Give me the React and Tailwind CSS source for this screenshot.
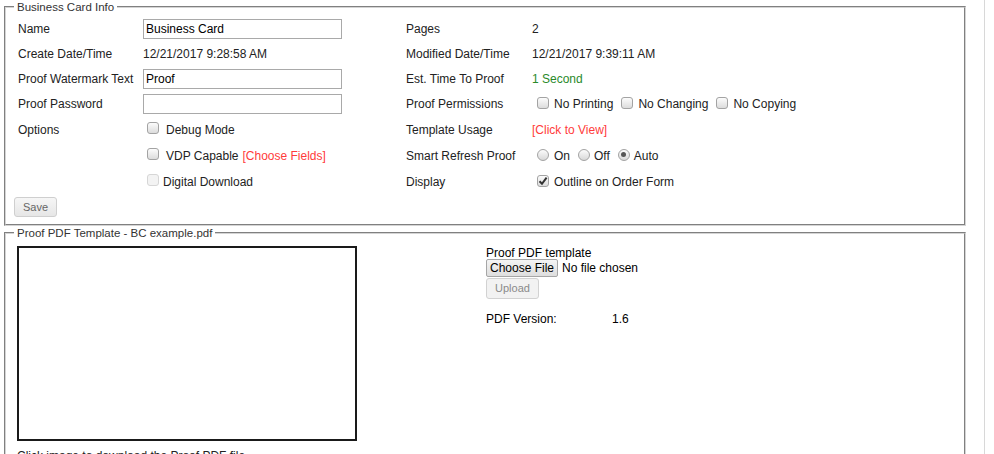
import React from "react";

const FONT = { fontFamily: '"Liberation Sans", Arial, sans-serif' };

function Box({ checked = false, disabled = false, className = "" }) {
  return (
    <span
      className={
        "inline-flex w-[12px] h-[12px] shrink-0 items-center justify-center rounded-[3px] border " +
        (disabled
          ? "border-[#d6d6d6] bg-[#f3f3f3] "
          : "border-[#a3a3a3] bg-gradient-to-b from-[#fcfcfc] to-[#dcdcdc] ") +
        className
      }
    >
      {checked && (
        <svg width="10" height="10" viewBox="0 0 10 10">
          <path d="M1.5 5.2 L4 7.8 L8.6 1.6" fill="none" stroke="#333" strokeWidth="2" />
        </svg>
      )}
    </span>
  );
}

function Radio({ checked = false, className = "" }) {
  return (
    <span
      className={
        "inline-flex w-[12px] h-[12px] shrink-0 items-center justify-center rounded-full border border-[#a3a3a3] bg-gradient-to-b from-[#fcfcfc] to-[#d8d8d8] " +
        className
      }
    >
      {checked && <span className="w-[5px] h-[5px] rounded-full bg-[#555]" />}
    </span>
  );
}

function Row({ h = "h-[25px]", label, value, rlabel, rvalue }) {
  return (
    <div className={"flex items-center " + h}>
      <div className="w-[125px] shrink-0">{label}</div>
      <div className="w-[263px] shrink-0 flex items-center">{value}</div>
      <div className="w-[126px] shrink-0">{rlabel}</div>
      <div className="flex items-center">{rvalue}</div>
    </div>
  );
}

function TextInput({ value }) {
  return (
    <div className="w-[199px] h-[20px] border border-[#a9a9a9] bg-white px-[2px] flex items-center text-black">
      {value}
    </div>
  );
}

export default function App() {
  return (
    <div className="flex bg-white text-[12px] text-[#222] h-[454px] overflow-hidden" style={FONT}>
      <div className="w-[984px] shrink-0">
        <fieldset className="ml-[4px] w-[962px] h-[226px] border-2 [border-style:groove] border-[#d4d4d4] pl-[8px] pt-[2px]">
          <legend className="px-[3px] text-[11.5px] leading-[14px] text-[#333]">Business Card Info</legend>
          <div className="pl-[4px]">
            <Row
              label="Name"
              value={<TextInput value="Business Card" />}
              rlabel="Pages"
              rvalue="2"
            />
            <Row
              label="Create Date/Time"
              value="12/21/2017 9:28:58 AM"
              rlabel="Modified Date/Time"
              rvalue="12/21/2017 9:39:11 AM"
            />
            <Row
              label="Proof Watermark Text"
              value={<TextInput value="Proof" />}
              rlabel="Est. Time To Proof"
              rvalue={<span className="text-[#2a8a2a]">1 Second</span>}
            />
            <Row
              label="Proof Password"
              value={<TextInput value="" />}
              rlabel="Proof Permissions"
              rvalue={
                <>
                  <Box className="ml-[5px] -mt-[2px]" />
                  <span className="ml-[5px]">No Printing</span>
                  <Box className="ml-[8px] -mt-[2px]" />
                  <span className="ml-[5px]">No Changing</span>
                  <Box className="ml-[8px] -mt-[2px]" />
                  <span className="ml-[5px]">No Copying</span>
                </>
              }
            />
            <div className="h-[1px]" />
            <Row
              h="h-[26px]"
              label="Options"
              value={
                <>
                  <Box className="ml-[4px] -mt-[4px]" />
                  <span className="ml-[7px]">Debug Mode</span>
                </>
              }
              rlabel="Template Usage"
              rvalue={<span className="text-[#ff3b3b]">[Click to View]</span>}
            />
            <Row
              h="h-[26px]"
              label=""
              value={
                <>
                  <Box className="ml-[4px] -mt-[4px]" />
                  <span className="ml-[7px]">VDP Capable</span>
                  <span className="ml-[4px] text-[#ff3b3b]">[Choose Fields]</span>
                </>
              }
              rlabel="Smart Refresh Proof"
              rvalue={
                <>
                  <Radio className="ml-[5px] -mt-[3px]" />
                  <span className="ml-[5px]">On</span>
                  <Radio className="ml-[8px] -mt-[3px]" />
                  <span className="ml-[4px]">Off</span>
                  <Radio checked className="ml-[8px] -mt-[3px]" />
                  <span className="ml-[4px]">Auto</span>
                </>
              }
            />
            <Row
              h="h-[26px]"
              label=""
              value={
                <>
                  <Box disabled className="ml-[4px] -mt-[4px]" />
                  <span className="ml-[4px]">Digital Download</span>
                </>
              }
              rlabel="Display"
              rvalue={
                <>
                  <Box checked className="ml-[5px] -mt-[3px]" />
                  <span className="ml-[5px]">Outline on Order Form</span>
                </>
              }
            />
          </div>
          <button className="mt-[2px] w-[43px] h-[20px] rounded-[3px] border border-[#cfcfcf] bg-gradient-to-b from-[#f6f6f6] to-[#e6e6e6] text-[11px] text-[#666] flex items-center justify-center">
            Save
          </button>
        </fieldset>

        <fieldset className="ml-[4px] w-[962px] h-[300px] border-2 [border-style:groove] border-[#d4d4d4] pl-[8px]">
          <legend className="px-[3px] text-[11.5px] leading-[14px] text-[#333]">Proof PDF Template - BC example.pdf</legend>
          <div className="flex">
            <div className="ml-[3px] mt-[6px] w-[340px]">
              <div className="w-[340px] h-[195px] border-2 border-[#1a1a1a] bg-white" />
              <div className="mt-[8px] leading-[14px] text-[#222]">Click image to download the Proof PDF file</div>
            </div>
            <div className="ml-[129px] mt-[7px] flex flex-col">
              <div className="leading-[12px] text-black">Proof PDF template</div>
              <div className="flex items-center">
                <button className="w-[72px] h-[18px] rounded-[2px] border border-[#a6a6a6] bg-gradient-to-b from-[#f4f4f4] to-[#dedede] text-black text-[12px] flex items-center justify-center">
                  Choose File
                </button>
                <span className="ml-[4px] text-black">No file chosen</span>
              </div>
              <button className="mt-[1px] w-[53px] h-[21px] rounded-[3px] border border-[#d2d2d2] bg-[#f2f2f2] text-[11px] text-[#8a8a8a] flex items-center justify-center">
                Upload
              </button>
              <div className="mt-[13px] flex leading-[14px] text-black">
                <span className="w-[126px]">PDF Version:</span>
                <span>1.6</span>
              </div>
            </div>
          </div>
        </fieldset>
      </div>
      <div className="flex-1 border-l border-[#d8d8d8]" />
    </div>
  );
}
